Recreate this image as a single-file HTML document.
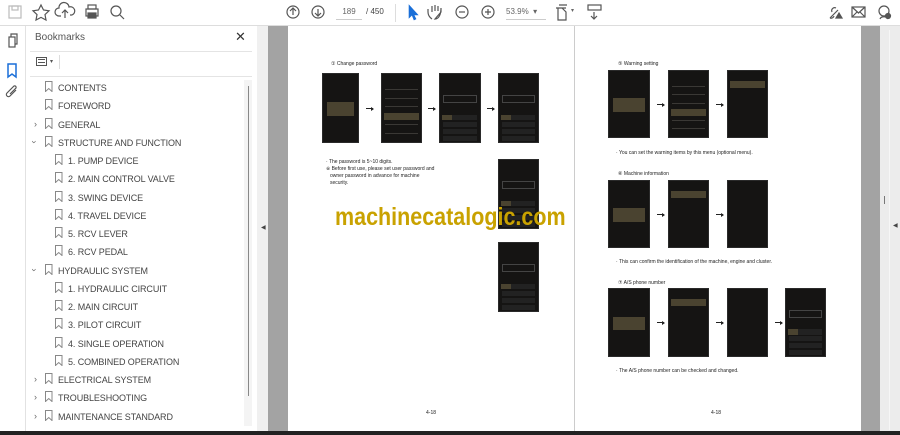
<!DOCTYPE html>
<html><head><meta charset="utf-8"><style>
*{margin:0;padding:0;box-sizing:border-box}
body{width:900px;height:435px;overflow:hidden;background:#fff;font-family:"Liberation Sans",sans-serif;position:relative}
.a{position:absolute}
.ph{position:absolute;background:#151413;border:1px solid #2a2a2a}
.ph .r{position:absolute;left:3px;right:3px;height:1px;background:#3a3835}
.ph .hl{position:absolute;left:2px;right:2px;background:#4a4330}
.bm{position:absolute;font-size:9px;color:#444;white-space:nowrap;letter-spacing:-0.1px}
.ic{position:absolute;width:8px;height:11px;margin-top:-2px}
.ic svg{display:block}
.ch{position:absolute;font-size:9px;color:#666}
.t{position:absolute;font-size:5px;color:#222;white-space:nowrap}
.arr{position:absolute;width:7px;height:1px;background:#222}
.arr:after{content:"";position:absolute;right:-1px;top:-1.5px;border-left:3px solid #222;border-top:2px solid transparent;border-bottom:2px solid transparent}
</style></head><body>
<div class="a" style="left:0;top:0;width:900px;height:26px;background:#fff;border-bottom:1px solid #ddd"></div>
<svg class="a" style="left:0;top:0" width="900" height="26" fill="none" stroke="#555" stroke-width="1.2">
<rect x="9" y="6" width="12" height="12" stroke="#bbb"/><rect x="12" y="6" width="6" height="4" stroke="#bbb"/>
<path d="M41 5l2.5 5 5.5.8-4 3.8 1 5.4-5-2.6-5 2.6 1-5.4-4-3.8 5.5-.8z"/>
<path d="M61 16h-2a4 4 0 0 1 0-8 5 5 0 0 1 10-1 4 4 0 0 1 3 8h-2M65 10v8M62 13l3-3 3 3"/>
<rect x="86" y="9" width="12" height="7"/><rect x="88" y="5" width="8" height="4"/><rect x="88" y="13" width="8" height="5" fill="#555"/>
<circle cx="116" cy="11" r="5"/><path d="M120 15l4 4"/>
<circle cx="293" cy="12" r="6"/><path d="M293 15V9M290 11l3-3 3 3"/>
<circle cx="318" cy="12" r="6"/><path d="M318 9v6M315 13l3 3 3-3"/>
<path d="M409 5v13l3-3 2 5 2-1-2-4h4z" fill="#1a6fd8" stroke="#1a6fd8" stroke-width=".6"/>
<path d="M432 19c-3-2-4-5-4-7v-3M432 12V6M435 11V5M438 11V6M441 12V8c0 6-2 11-6 11z"/>
<circle cx="462" cy="12" r="6"/><path d="M459 12h6"/>
<circle cx="488" cy="12" r="6"/><path d="M485 12h6M488 9v6"/>
<path d="M556 8h10M558 8v12h8V12l-4-4M559 5h8"/>
<rect x="588" y="5" width="13" height="5"/><path d="M594 12v7M591 16l3 3 3-3"/>
<path d="M830 18l8-8M832 12a3 3 0 0 1 4-4M834 16a3 3 0 0 1-4 2"/><path d="M836 18l3-5 3 5z" fill="#555"/>
<rect x="852" y="7" width="13" height="10"/><path d="M852 7l6.5 6 6.5-6M852 17l5-5M865 17l-5-5"/>
<circle cx="884" cy="11" r="5"/><path d="M880 19c1-3 7-3 8 0" /><circle cx="888" cy="16" r="2.5" fill="#555"/>
</svg>
<div class="a" style="left:336px;top:7px;width:26px;height:13px;border-bottom:1px solid #ccc;font-size:8px;color:#666;text-align:center">189</div>
<div class="a" style="left:366px;top:7px;font-size:8px;color:#444">/ 450</div>
<div class="a" style="left:395px;top:4px;width:1px;height:18px;background:#ddd"></div>
<div class="a" style="left:506px;top:7px;width:40px;height:13px;border-bottom:1px solid #ccc;font-size:8px;color:#666">53.9% &nbsp;▾</div>
<div class="a" style="left:571px;top:7px;font-size:6px;color:#666">▾</div>
<div class="a" style="left:25px;top:26px;width:1px;height:405px;background:#e2e2e2"></div>
<svg class="a" style="left:0;top:26px" width="25" height="80" fill="none" stroke="#555" stroke-width="1.2">
<rect x="9" y="11" width="6" height="10"/><path d="M11 11V8h6v10h-2"/>
<path d="M8 38h8v13l-4-3-4 3z" stroke="#1a6fd8" stroke-width="1.5"/>
<path d="M16 64l-6 6a2 2 0 0 1-3-3l7-7a1.5 1.5 0 0 1 2 2l-6 6"/>
</svg>
<div class="a" style="left:35px;top:32px;font-size:10px;color:#555">Bookmarks</div>
<div class="a" style="left:235px;top:29px;font-size:13px;color:#333">✕</div>
<div class="a" style="left:30px;top:51px;width:222px;height:1px;background:#e4e4e4"></div>
<div class="a" style="left:36px;top:57px;width:11px;height:9px;border:1px solid #555"></div>
<div class="a" style="left:38px;top:59px;width:7px;height:1px;background:#555;box-shadow:0 3px 0 #555"></div>
<div class="a" style="left:50px;top:58px;font-size:6px;color:#555">▾</div>
<div class="a" style="left:59px;top:55px;width:1px;height:14px;background:#ddd"></div>
<div class="a" style="left:30px;top:76px;width:222px;height:1px;background:#e4e4e4"></div>
<div class="a" style="left:244px;top:80px;width:8px;height:346px;background:#f4f4f4"></div>
<div class="a" style="left:248px;top:86px;width:1px;height:310px;background:#888"></div>
<div class="a" style="left:257px;top:26px;width:11px;height:405px;background:#f0f0f0"></div>
<div class="a" style="left:268px;top:26px;width:20px;height:405px;background:#a3a3a3"></div>
<div class="a" style="left:261px;top:224px;font-size:6px;color:#444">◀</div>

<div class="ic" style="left:45px;top:83px"></div><div class="bm" style="left:58px;top:83px">CONTENTS</div>
<div class="ic" style="left:45px;top:101px"></div><div class="bm" style="left:58px;top:101px">FOREWORD</div>
<div class="ch" style="left:34px;top:119px">›</div><div class="ic" style="left:45px;top:120px"></div><div class="bm" style="left:58px;top:120px">GENERAL</div>
<div class="ch" style="left:33px;top:137px;transform:rotate(90deg)">›</div><div class="ic" style="left:45px;top:138px"></div><div class="bm" style="left:58px;top:138px">STRUCTURE AND FUNCTION</div>
<div class="ic" style="left:55px;top:156px"></div><div class="bm" style="left:68px;top:156px">1. PUMP DEVICE</div>
<div class="ic" style="left:55px;top:174px"></div><div class="bm" style="left:68px;top:174px">2. MAIN CONTROL VALVE</div>
<div class="ic" style="left:55px;top:193px"></div><div class="bm" style="left:68px;top:193px">3. SWING DEVICE</div>
<div class="ic" style="left:55px;top:211px"></div><div class="bm" style="left:68px;top:211px">4. TRAVEL DEVICE</div>
<div class="ic" style="left:55px;top:229px"></div><div class="bm" style="left:68px;top:229px">5. RCV LEVER</div>
<div class="ic" style="left:55px;top:247px"></div><div class="bm" style="left:68px;top:247px">6. RCV PEDAL</div>
<div class="ch" style="left:33px;top:265px;transform:rotate(90deg)">›</div><div class="ic" style="left:45px;top:266px"></div><div class="bm" style="left:58px;top:266px">HYDRAULIC SYSTEM</div>
<div class="ic" style="left:55px;top:284px"></div><div class="bm" style="left:68px;top:284px">1. HYDRAULIC CIRCUIT</div>
<div class="ic" style="left:55px;top:302px"></div><div class="bm" style="left:68px;top:302px">2. MAIN CIRCUIT</div>
<div class="ic" style="left:55px;top:320px"></div><div class="bm" style="left:68px;top:320px">3. PILOT CIRCUIT</div>
<div class="ic" style="left:55px;top:339px"></div><div class="bm" style="left:68px;top:339px">4. SINGLE OPERATION</div>
<div class="ic" style="left:55px;top:357px"></div><div class="bm" style="left:68px;top:357px">5. COMBINED OPERATION</div>
<div class="ch" style="left:34px;top:374px">›</div><div class="ic" style="left:45px;top:375px"></div><div class="bm" style="left:58px;top:375px">ELECTRICAL SYSTEM</div>
<div class="ch" style="left:34px;top:392px">›</div><div class="ic" style="left:45px;top:393px"></div><div class="bm" style="left:58px;top:393px">TROUBLESHOOTING</div>
<div class="ch" style="left:34px;top:411px">›</div><div class="ic" style="left:45px;top:412px"></div><div class="bm" style="left:58px;top:412px">MAINTENANCE STANDARD</div>

<div class="a" style="left:574px;top:26px;width:1px;height:405px;background:#ccc"></div>
<div class="a" style="left:861px;top:26px;width:19px;height:405px;background:#a3a3a3"></div>
<div class="a" style="left:880px;top:26px;width:20px;height:405px;background:#ececec"></div>
<div class="a" style="left:889px;top:30px;width:1px;height:400px;background:#f6f6f6"></div>
<div class="a" style="left:884px;top:196px;width:1px;height:8px;background:#777"></div>
<div class="a" style="left:893px;top:222px;font-size:6px;color:#444">◀</div>
<div class="a" style="left:0;top:431px;width:900px;height:4px;background:#222"></div>

<div class="t" style="left:331px;top:61px">① Change password</div>
<div class="t" style="left:326px;top:159px">· The password is 5~10 digits.</div>
<div class="t" style="left:326px;top:166px">※ Before first use, please set user password and</div>
<div class="t" style="left:330px;top:173px">owner password in advance for machine</div>
<div class="t" style="left:330px;top:180px">security.</div>
<div class="t" style="left:426px;top:410px">4-18</div>

<div class="t" style="left:618px;top:61px">⑤ Warning setting</div>
<div class="t" style="left:616px;top:150px">· You can set the warning items by this menu (optional menu).</div>
<div class="t" style="left:618px;top:171px">⑥ Machine information</div>
<div class="t" style="left:616px;top:259px">· This can confirm the identification of the machine, engine and cluster.</div>
<div class="t" style="left:618px;top:280px">⑦ A/S phone number</div>
<div class="t" style="left:616px;top:368px">· The A/S phone number can be checked and changed.</div>
<div class="t" style="left:711px;top:410px">4-18</div>

<script>
var ics=document.querySelectorAll('.ic');
for(var k=0;k<ics.length;k++)ics[k].innerHTML='<svg width="8" height="11"><path d="M0.5 0.5h6.5v10l-3.25-3-3.25 3z" fill="none" stroke="#888"/></svg>';
function ph(x,y,w,h,type){
  var d=document.createElement('div');d.className='ph';
  d.style.cssText='left:'+x+'px;top:'+y+'px;width:'+w+'px;height:'+h+'px';
  var s='';
  if(type=='home'){s+='<div class="hl" style="top:'+(h*0.4)+'px;height:'+(h*0.2)+'px;left:4px;right:4px"></div>';}
  else if(type=='menu'){for(var i=1;i<7;i++)s+='<div class="r" style="top:'+(6+i*h/8)+'px"></div>';s+='<div class="hl" style="top:'+(h*0.56)+'px;height:'+(h*0.1)+'px"></div>';}
  else if(type=='pad'){s+='<div class="r" style="top:'+(h*0.3)+'px;height:'+(h*0.12)+'px;background:none;border:1px solid #444"></div>';for(var i=0;i<4;i++)s+='<div class="r" style="top:'+(h*0.58+i*h*0.1)+'px;height:'+(h*0.08)+'px;background:#222"></div>';s+='<div class="hl" style="top:'+(h*0.58)+'px;height:'+(h*0.08)+'px;right:70%"></div>';}
  else if(type=='list'){s+='<div class="hl" style="top:'+(h*0.15)+'px;height:'+(h*0.1)+'px"></div>';}
  d.innerHTML=s;document.body.appendChild(d);
}
function arr(x,y){var a=document.createElement('div');a.className='arr';a.style.left=x+'px';a.style.top=y+'px';document.body.appendChild(a);}
ph(322,73,37,70,'home');arr(366,108);ph(381,73,41,70,'menu');arr(428,108);ph(439,73,42,70,'pad');arr(487,108);ph(498,73,41,70,'pad');
ph(498,159,41,70,'pad');ph(498,242,41,70,'pad');
ph(608,70,42,68,'home');arr(657,104);ph(668,70,41,68,'menu');arr(716,104);ph(727,70,41,68,'list');
ph(608,180,42,68,'home');arr(657,214);ph(668,180,41,68,'list');arr(716,214);ph(727,180,41,68,'x');
ph(608,288,42,69,'home');arr(657,322);ph(668,288,41,69,'list');arr(716,322);ph(727,288,41,69,'x');arr(775,322);ph(785,288,41,69,'pad');
</script>
<div class="a" style="left:335px;top:203px;font-size:21.5px;font-weight:bold;color:#c9a200;white-space:nowrap;transform:scaleY(1.15);transform-origin:left top">machinecatalogic.com</div>
</body></html>
